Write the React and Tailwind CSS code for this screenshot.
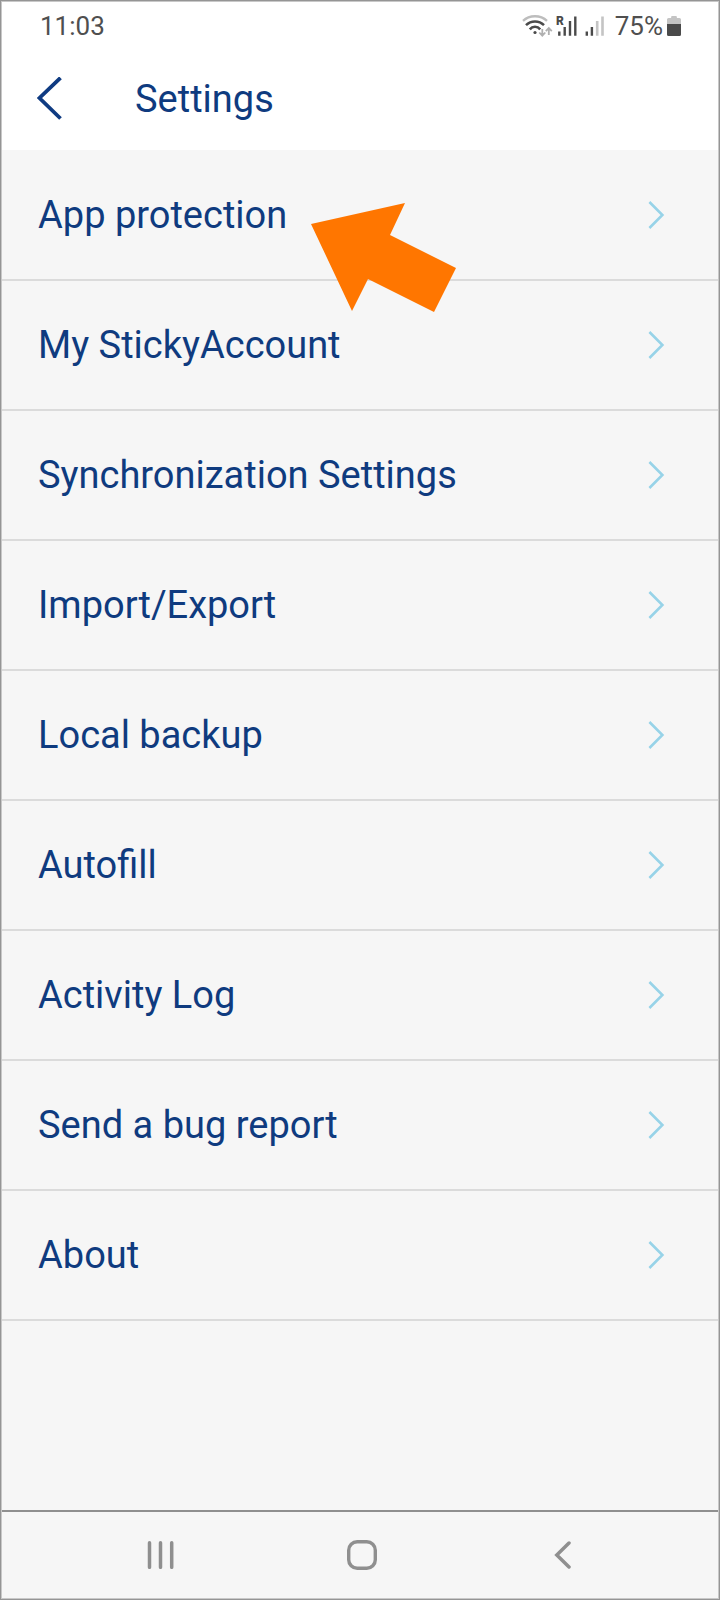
import React from "react";

const items = [
  "App protection",
  "My StickyAccount",
  "Synchronization Settings",
  "Import/Export",
  "Local backup",
  "Autofill",
  "Activity Log",
  "Send a bug report",
  "About",
];

const WifiIcon = () => (
  <svg width="32" height="26" viewBox="0 0 32 26" fill="none" aria-hidden="true">
    <path d="M1 7.800C7.500 1.700 18.500 1.700 25 7.800" stroke="#bdbdbd" strokeWidth="2.300" />
    <path d="M4 12.200C9 7.200 17 7.200 22 12.200" stroke="#4a4a4a" strokeWidth="2.500" />
    <path d="M7.800 16.400C10.500 13 15.500 13 18.200 16.400" stroke="#4a4a4a" strokeWidth="2.500" />
    <circle cx="13" cy="19.500" r="1.600" fill="#4a4a4a" />
    <path d="M20.300 16v6.500M17.300 19.500l3 3.200 3-3.200M26.800 22v-6.500M23.800 18.200l3-3.200 3 3.200" stroke="#b0b0b0" strokeWidth="1.800" />
  </svg>
);

const RoamingSignalIcon = () => (
  <svg width="21" height="26" viewBox="0 0 21 26" fill="none">
    <text x="0" y="12" fill="#4a4a4a" className="text-[12px] font-black">
      R
    </text>
    <path d="M3.300 18.500V22.700M8.700 14V22.700M14 8V22.700M19.300 3.600V22.700" stroke="#4a4a4a" strokeWidth="2.400" />
  </svg>
);

const SignalIcon = () => (
  <svg width="20" height="26" viewBox="0 0 20 26" fill="none" aria-hidden="true">
    <path d="M1.800 18.500V22.700M6.900 14V22.700" stroke="#4a4a4a" strokeWidth="2.400" />
    <path d="M12.200 8V22.700M17.500 3.600V22.700" stroke="#c4c4c4" strokeWidth="2.600" />
  </svg>
);

const BatteryIcon = () => (
  <svg width="14" height="26" viewBox="0 0 14 26" aria-hidden="true">
    <path d="M4.500 3h5L10 5h2.500A1.500 1.500 0 0 1 14 6.500V11H0V6.500A1.500 1.500 0 0 1 1.500 5H4z" fill="#c4c4c4" />
    <path d="M0 11h14v10.500a1.500 1.500 0 0 1-1.500 1.500h-11A1.500 1.500 0 0 1 0 21.500z" fill="#4a4a4a" />
  </svg>
);

const Arrow = () => (
  <svg
    className="pointer-events-none absolute top-[53px] left-[309px]"
    width="146"
    height="110"
    viewBox="0 0 146 110"
    aria-hidden="true"
  >
    <path d="M0 21L94 0 79 32 145 65 123 109 57 76 41 108z" fill="#ff7600" />
  </svg>
);

const App = () => {
  return (
    <div className="min-h-screen flex flex-col border border-[#959595] font-[Roboto,sans-serif]">
      <div className="flex flex-1 flex-col border border-[#c8c8c8] bg-[#f6f6f6]">
        <header className="bg-white pb-0.5">
          <div className="flex h-12 items-center justify-between pr-[37px] pl-[38px] text-[26px] text-[#4f4f4f]">
            <span>11:03</span>
            <div className="flex items-center">
              <WifiIcon />
              <div className="ml-0.5 mr-2.5 flex gap-2">
                <RoamingSignalIcon />
                <SignalIcon />
              </div>
              <span className="mr-1">75%</span>
              <BatteryIcon />
            </div>
          </div>
          <div className="flex h-[98px] items-center gap-[72px] pl-[35px]">
            <button type="button" aria-label="Back">
              <svg width="26" height="44" viewBox="0 0 26 44" fill="none" aria-hidden="true">
                <path d="M23.500 .8L2.500 21l21 20.500" stroke="#0f3b82" strokeWidth="3.800" />
              </svg>
            </button>
            <h1 className="text-[38px] text-[#0f3b7f]">Settings</h1>
          </div>
        </header>

        <main className="relative flex-1 pt-px">
          <ul>
            {items.map((item) => (
              <li key={item}>
                <a
                  href="#"
                  className="flex h-[130px] items-center justify-between border-b-2 border-[#dbdbdb] pr-[53px] pl-9 text-[38px] text-[#0f3b7f]"
                >
                  {item}
                  <svg width="17" height="28" viewBox="0 0 17 28" fill="none" aria-hidden="true">
                    <path d="M1.400 1l13 13-13 13" stroke="#97d3e8" strokeWidth="2.600" />
                  </svg>
                </a>
              </li>
            ))}
          </ul>
          <Arrow />
        </main>

        <nav className="flex h-[88px] items-center justify-between border-t-2 border-[#8f8f8f] pr-35 pl-36">
          <button type="button" aria-label="Recent apps" className="flex w-[30px] justify-center">
            <svg width="28" height="28" viewBox="0 0 28 28" fill="none" aria-hidden="true">
              <path d="M2.500 1.800v24.500M13.500 1.800v24.500M24.700 1.800v24.500" stroke="#8f8f8f" strokeWidth="3.500" strokeLinecap="round" />
            </svg>
          </button>
          <button type="button" aria-label="Home" className="flex w-[30px] justify-center">
            <svg width="30" height="30" viewBox="0 0 30 30" fill="none" aria-hidden="true">
              <rect x="1.700" y="1.700" width="26.600" height="26.600" rx="8.500" stroke="#8f8f8f" strokeWidth="3.400" />
            </svg>
          </button>
          <button type="button" aria-label="Back" className="flex w-[30px] justify-center">
            <svg width="18" height="28" viewBox="0 0 18 28" fill="none" aria-hidden="true">
              <path d="M15 2L2.800 14 15 26" stroke="#8f8f8f" strokeWidth="3.500" strokeLinecap="round" />
            </svg>
          </button>
        </nav>
      </div>
    </div>
  );
};

export default App;
